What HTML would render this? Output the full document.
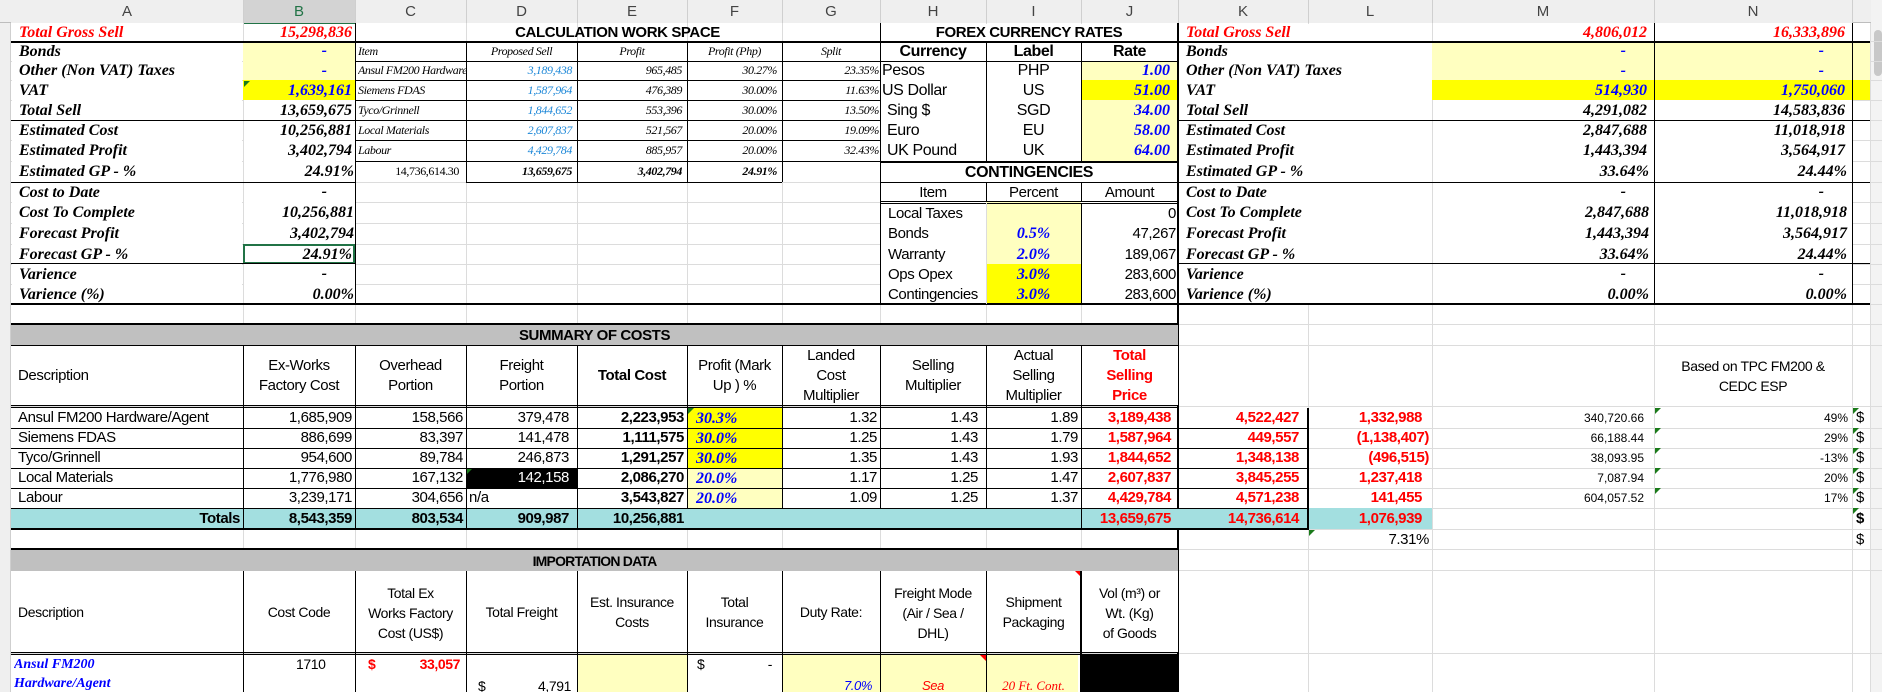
<!DOCTYPE html>
<html><head><meta charset="utf-8">
<style>
html,body{margin:0;padding:0;background:#fff;}
body{width:1882px;height:692px;position:relative;overflow:hidden;font-family:"Liberation Sans",sans-serif;}
.a{position:absolute;white-space:nowrap;overflow:hidden;box-sizing:border-box;}
.gv{position:absolute;top:23px;width:1px;height:669px;background:#dcdcdc;}
.hv{position:absolute;top:0;width:1px;height:23px;background:#cfcfcf;}
.gh{position:absolute;left:11px;width:1871px;height:1px;background:#dcdcdc;}
.bh{position:absolute;height:1px;background:#000;}
.bv{position:absolute;width:1px;background:#000;}
.sb{font-family:"Liberation Serif",serif;font-weight:bold;font-style:italic;font-size:16px;color:#000;}
.si{font-family:"Liberation Serif",serif;font-style:italic;font-size:12px;letter-spacing:-0.4px;}
.ar{font-family:"Liberation Sans",sans-serif;font-size:15px;letter-spacing:-0.4px;}
.r{text-align:right;padding-right:3px;}
.c{text-align:center;}
.red{color:#f00;}
.blue{color:#00f;}
.ly{background:#ffffc0;}
.yy{background:#ffff00;}
.b{font-weight:bold;}
.tri{position:absolute;width:0;height:0;border-top:6px solid #1a7a1a;border-right:6px solid transparent;}
.hd{position:absolute;top:0;height:23px;line-height:24px;text-align:center;font-size:15px;color:#444;background:#efefef;font-family:"Liberation Sans",sans-serif;}
</style></head><body>

<div class="a" style="left:0;top:0;width:1882px;height:23px;background:#efefef;border-bottom:1px solid #bdbdbd"></div>
<div class="hd" style="left:11px;width:232px">A</div>
<div class="hd" style="left:243px;width:112px;background:#d3d3d3;border-bottom:2px solid #217346;color:#217346">B</div>
<div class="hd" style="left:355px;width:111px">C</div>
<div class="hd" style="left:466px;width:111px">D</div>
<div class="hd" style="left:577px;width:110px">E</div>
<div class="hd" style="left:687px;width:95px">F</div>
<div class="hd" style="left:782px;width:98px">G</div>
<div class="hd" style="left:880px;width:106px">H</div>
<div class="hd" style="left:986px;width:95px">I</div>
<div class="hd" style="left:1081px;width:97px">J</div>
<div class="hd" style="left:1178px;width:130px">K</div>
<div class="hd" style="left:1308px;width:124px">L</div>
<div class="hd" style="left:1432px;width:222px">M</div>
<div class="hd" style="left:1654px;width:198px">N</div>
<div class="hv" style="left:243px"></div><div class="hv" style="left:355px"></div><div class="hv" style="left:466px"></div>
<div class="hv" style="left:577px"></div><div class="hv" style="left:687px"></div><div class="hv" style="left:782px"></div>
<div class="hv" style="left:880px"></div><div class="hv" style="left:986px"></div><div class="hv" style="left:1081px"></div>
<div class="hv" style="left:1178px"></div><div class="hv" style="left:1308px"></div><div class="hv" style="left:1432px"></div>
<div class="hv" style="left:1654px"></div><div class="hv" style="left:1852px"></div>
<div class="a" style="left:0;top:23px;width:11px;height:669px;background:#efefef;border-right:1px solid #cfcfcf"></div>
<div class="a" style="left:1871px;top:0;width:11px;height:692px;background:#f3f3f3"></div>
<div class="a" style="left:1874px;top:30px;width:8px;height:46px;background:#c8c8c8;border-radius:4px"></div>

<div class="gv" style="left:243px"></div><div class="gv" style="left:355px"></div><div class="gv" style="left:466px"></div>
<div class="gv" style="left:577px"></div><div class="gv" style="left:687px"></div><div class="gv" style="left:782px"></div>
<div class="gv" style="left:880px"></div><div class="gv" style="left:986px"></div><div class="gv" style="left:1081px"></div>
<div class="gv" style="left:1308px"></div><div class="gv" style="left:1432px"></div><div class="gv" style="left:1654px"></div>
<div class="gv" style="left:1852px"></div><div class="gv" style="left:1870px"></div>
<div class="gh" style="top:41px"></div><div class="gh" style="top:61px"></div><div class="gh" style="top:80px"></div>
<div class="gh" style="top:100px"></div><div class="gh" style="top:120px"></div><div class="gh" style="top:140px"></div>
<div class="gh" style="top:161px"></div><div class="gh" style="top:182px"></div><div class="gh" style="top:202px"></div>
<div class="gh" style="top:223px"></div><div class="gh" style="top:244px"></div><div class="gh" style="top:264px"></div>
<div class="gh" style="top:284px"></div><div class="gh" style="top:304px"></div><div class="gh" style="top:324px"></div>
<div class="gh" style="top:345px"></div><div class="gh" style="top:406px"></div><div class="gh" style="top:428px"></div>
<div class="gh" style="top:448px"></div><div class="gh" style="top:468px"></div><div class="gh" style="top:488px"></div>
<div class="gh" style="top:508px"></div><div class="gh" style="top:529px"></div><div class="gh" style="top:549px"></div>
<div class="gh" style="top:570px"></div><div class="gh" style="top:653px"></div>

<div class="a" style="left:12px;top:24px;width:230px;height:280px;background:#fff"></div>
<div class="a" style="left:244px;top:24px;width:111px;height:280px;background:#fff"></div>
<div class="a" style="left:881px;top:24px;width:297px;height:280px;background:#fff"></div>
<div class="a" style="left:1179px;top:24px;width:253px;height:280px;background:#fff"></div>
<div class="a" style="left:1433px;top:24px;width:221px;height:280px;background:#fff"></div>
<div class="a" style="left:1655px;top:24px;width:197px;height:280px;background:#fff"></div>

<div class="a ly" style="left:243px;top:41px;width:112px;height:39px"></div>
<div class="a yy" style="left:243px;top:80px;width:112px;height:20px"></div>
<div class="a ly" style="left:1081px;top:61px;width:97px;height:100px"></div>
<div class="a yy" style="left:1081px;top:80px;width:97px;height:20px"></div>
<div class="a ly" style="left:986px;top:202px;width:95px;height:62px"></div>
<div class="a yy" style="left:986px;top:264px;width:95px;height:40px"></div>
<div class="a ly" style="left:1432px;top:41px;width:438px;height:39px"></div>
<div class="a yy" style="left:1432px;top:80px;width:438px;height:20px"></div>

<!-- LEFT SUMMARY BOX -->
<div class="a sb red" style="left:11px;top:23px;width:232px;height:18px;line-height:19px;padding-left:8px">Total Gross Sell</div>
<div class="a sb red r" style="left:243px;top:23px;width:112px;height:18px;line-height:19px">15,298,836</div>
<div class="a sb" style="left:11px;top:41px;width:232px;height:20px;line-height:21px;padding-left:8px">Bonds</div>
<div class="a sb blue r" style="left:243px;top:41px;width:112px;height:20px;line-height:20px;padding-right:28px">-</div>
<div class="a sb" style="left:11px;top:61px;width:232px;height:19px;line-height:20px;padding-left:8px">Other (Non VAT) Taxes</div>
<div class="a sb blue r" style="left:243px;top:61px;width:112px;height:19px;line-height:19px;padding-right:28px">-</div>
<div class="a sb" style="left:11px;top:80px;width:232px;height:20px;line-height:21px;padding-left:8px">VAT</div>
<div class="a sb blue r" style="left:243px;top:80px;width:112px;height:20px;line-height:21px">1,639,161</div>
<div class="tri" style="left:244px;top:81px"></div>
<div class="a sb" style="left:11px;top:100px;width:232px;height:20px;line-height:21px;padding-left:8px">Total Sell</div>
<div class="a sb r" style="left:243px;top:100px;width:112px;height:20px;line-height:21px">13,659,675</div>
<div class="a sb" style="left:11px;top:120px;width:232px;height:20px;line-height:21px;padding-left:8px">Estimated Cost</div>
<div class="a sb r" style="left:243px;top:120px;width:112px;height:20px;line-height:21px">10,256,881</div>
<div class="a sb" style="left:11px;top:140px;width:232px;height:21px;line-height:22px;padding-left:8px">Estimated Profit</div>
<div class="a sb r" style="left:243px;top:140px;width:112px;height:21px;line-height:22px">3,402,794</div>
<div class="a sb" style="left:11px;top:161px;width:232px;height:21px;line-height:22px;padding-left:8px">Estimated GP - %</div>
<div class="a sb r" style="left:243px;top:161px;width:112px;height:21px;line-height:22px;padding-right:1px">24.91%</div>
<div class="a sb" style="left:11px;top:182px;width:232px;height:20px;line-height:21px;padding-left:8px">Cost to Date</div>
<div class="a sb r" style="left:243px;top:182px;width:112px;height:20px;line-height:20px;padding-right:28px">-</div>
<div class="a sb" style="left:11px;top:202px;width:232px;height:21px;line-height:22px;padding-left:8px">Cost To Complete</div>
<div class="a sb r" style="left:243px;top:202px;width:112px;height:21px;line-height:22px;padding-right:1px">10,256,881</div>
<div class="a sb" style="left:11px;top:223px;width:232px;height:21px;line-height:22px;padding-left:8px">Forecast Profit</div>
<div class="a sb r" style="left:243px;top:223px;width:112px;height:21px;line-height:22px;padding-right:1px">3,402,794</div>
<div class="a sb" style="left:11px;top:244px;width:232px;height:20px;line-height:21px;padding-left:8px">Forecast GP - %</div>
<div class="a sb r" style="left:243px;top:244px;width:112px;height:20px;line-height:18px;padding-right:1px;border:2px solid #217346">24.91%</div>
<div class="a sb" style="left:11px;top:264px;width:232px;height:20px;line-height:21px;padding-left:8px">Varience</div>
<div class="a sb r" style="left:243px;top:264px;width:112px;height:20px;line-height:20px;padding-right:28px">-</div>
<div class="a sb" style="left:11px;top:284px;width:232px;height:20px;line-height:21px;padding-left:8px">Varience (%)</div>
<div class="a sb r" style="left:243px;top:284px;width:112px;height:20px;line-height:21px;padding-right:1px">0.00%</div>
<div class="bh" style="left:11px;top:41px;width:1859px;height:2px"></div>
<div class="bh" style="left:11px;top:120px;width:344px"></div>
<div class="bh" style="left:11px;top:182px;width:344px"></div>
<div class="bv" style="left:355px;top:23px;height:281px;"></div>
<div class="bh" style="left:11px;top:303px;width:1859px;height:2px"></div>

<!-- CALCULATION WORK SPACE -->
<div class="a ar b c" style="left:355px;top:23px;width:525px;height:18px;line-height:19px;font-size:15px">CALCULATION WORK SPACE</div>
<div class="a si" style="left:358px;top:41px;width:108px;height:20px;line-height:20px">Item</div>
<div class="a si c" style="left:466px;top:41px;width:111px;height:20px;line-height:20px">Proposed Sell</div>
<div class="a si c" style="left:577px;top:41px;width:110px;height:20px;line-height:20px">Profit</div>
<div class="a si c" style="left:687px;top:41px;width:95px;height:20px;line-height:20px">Profit (Php)</div>
<div class="a si c" style="left:782px;top:41px;width:98px;height:20px;line-height:20px">Split</div>

<div class="a si" style="left:358px;top:61px;width:108px;height:19px;line-height:19px">Ansul FM200 Hardware/Agent</div>
<div class="a si" style="left:358px;top:80px;width:108px;height:20px;line-height:20px">Siemens FDAS</div>
<div class="a si" style="left:358px;top:100px;width:108px;height:20px;line-height:20px">Tyco/Grinnell</div>
<div class="a si" style="left:358px;top:120px;width:108px;height:20px;line-height:20px">Local Materials</div>
<div class="a si" style="left:358px;top:140px;width:108px;height:21px;line-height:21px">Labour</div>
<div class="a si r" style="left:466px;top:61px;width:111px;height:19px;line-height:19px;color:#1e88d8;padding-right:5px">3,189,438</div>
<div class="a si r" style="left:466px;top:80px;width:111px;height:20px;line-height:20px;color:#1e88d8;padding-right:5px">1,587,964</div>
<div class="a si r" style="left:466px;top:100px;width:111px;height:20px;line-height:20px;color:#1e88d8;padding-right:5px">1,844,652</div>
<div class="a si r" style="left:466px;top:120px;width:111px;height:20px;line-height:20px;color:#1e88d8;padding-right:5px">2,607,837</div>
<div class="a si r" style="left:466px;top:140px;width:111px;height:21px;line-height:21px;color:#1e88d8;padding-right:5px">4,429,784</div>
<div class="a si r" style="left:577px;top:61px;width:110px;height:19px;line-height:19px;padding-right:5px">965,485</div>
<div class="a si r" style="left:577px;top:80px;width:110px;height:20px;line-height:20px;padding-right:5px">476,389</div>
<div class="a si r" style="left:577px;top:100px;width:110px;height:20px;line-height:20px;padding-right:5px">553,396</div>
<div class="a si r" style="left:577px;top:120px;width:110px;height:20px;line-height:20px;padding-right:5px">521,567</div>
<div class="a si r" style="left:577px;top:140px;width:110px;height:21px;line-height:21px;padding-right:5px">885,957</div>
<div class="a si r" style="left:687px;top:61px;width:95px;height:19px;line-height:19px;padding-right:5px">30.27%</div>
<div class="a si r" style="left:687px;top:80px;width:95px;height:20px;line-height:20px;padding-right:5px">30.00%</div>
<div class="a si r" style="left:687px;top:100px;width:95px;height:20px;line-height:20px;padding-right:5px">30.00%</div>
<div class="a si r" style="left:687px;top:120px;width:95px;height:20px;line-height:20px;padding-right:5px">20.00%</div>
<div class="a si r" style="left:687px;top:140px;width:95px;height:21px;line-height:21px;padding-right:5px">20.00%</div>
<div class="a si r" style="left:782px;top:61px;width:98px;height:19px;line-height:19px;padding-right:1px">23.35%</div>
<div class="a si r" style="left:782px;top:80px;width:98px;height:20px;line-height:20px;padding-right:1px">11.63%</div>
<div class="a si r" style="left:782px;top:100px;width:98px;height:20px;line-height:20px;padding-right:1px">13.50%</div>
<div class="a si r" style="left:782px;top:120px;width:98px;height:20px;line-height:20px;padding-right:1px">19.09%</div>
<div class="a si r" style="left:782px;top:140px;width:98px;height:21px;line-height:21px;padding-right:1px">32.43%</div>
<div class="a si r" style="left:355px;top:161px;width:111px;height:21px;line-height:21px;font-style:normal;padding-right:7px">14,736,614.30</div>
<div class="a si r b" style="left:466px;top:161px;width:111px;height:21px;line-height:21px;padding-right:5px">13,659,675</div>
<div class="a si r b" style="left:577px;top:161px;width:110px;height:21px;line-height:21px;padding-right:5px">3,402,794</div>
<div class="a si r b" style="left:687px;top:161px;width:95px;height:21px;line-height:21px;padding-right:5px">24.91%</div>
<div class="bh" style="left:355px;top:61px;width:525px"></div>
<div class="bh" style="left:355px;top:80px;width:525px"></div>
<div class="bh" style="left:355px;top:100px;width:525px"></div>
<div class="bh" style="left:355px;top:120px;width:525px"></div>
<div class="bh" style="left:355px;top:140px;width:525px"></div>
<div class="bh" style="left:355px;top:161px;width:525px"></div>
<div class="bh" style="left:466px;top:182px;width:316px"></div>
<div class="bv" style="left:466px;top:41px;height:141px"></div>
<div class="bv" style="left:577px;top:41px;height:141px"></div>
<div class="bv" style="left:687px;top:41px;height:141px"></div>
<div class="bv" style="left:782px;top:41px;height:141px"></div>
<div class="bv" style="left:880px;top:23px;height:281px"></div>

<!-- FOREX -->
<div class="a ar b c" style="left:880px;top:23px;width:298px;height:18px;line-height:19px;font-size:15px">FOREX CURRENCY RATES</div>
<div class="a ar b c" style="left:880px;top:41px;width:106px;height:20px;line-height:21px;font-size:16px">Currency</div>
<div class="a ar b c" style="left:986px;top:41px;width:95px;height:20px;line-height:21px;font-size:16px">Label</div>
<div class="a ar b c" style="left:1081px;top:41px;width:97px;height:20px;line-height:21px;font-size:16px">Rate</div>
<div class="a ar" style="left:882px;top:61px;width:104px;height:19px;line-height:20px;font-size:16px">Pesos</div>
<div class="a ar" style="left:882px;top:80px;width:104px;height:20px;line-height:21px;font-size:16px">US Dollar</div>
<div class="a ar" style="left:887px;top:100px;width:99px;height:20px;line-height:21px;font-size:16px">Sing $</div>
<div class="a ar" style="left:887px;top:120px;width:99px;height:20px;line-height:21px;font-size:16px">Euro</div>
<div class="a ar" style="left:887px;top:140px;width:99px;height:21px;line-height:22px;font-size:16px">UK Pound</div>
<div class="a ar c" style="left:986px;top:61px;width:95px;height:19px;line-height:20px;font-size:16px">PHP</div>
<div class="a ar c" style="left:986px;top:80px;width:95px;height:20px;line-height:21px;font-size:16px">US</div>
<div class="a ar c" style="left:986px;top:100px;width:95px;height:20px;line-height:21px;font-size:16px">SGD</div>
<div class="a ar c" style="left:986px;top:120px;width:95px;height:20px;line-height:21px;font-size:16px">EU</div>
<div class="a ar c" style="left:986px;top:140px;width:95px;height:21px;line-height:22px;font-size:16px">UK</div>
<div class="a sb blue r" style="left:1081px;top:61px;width:97px;height:19px;line-height:20px;padding-right:8px">1.00</div>
<div class="a sb blue r" style="left:1081px;top:80px;width:97px;height:20px;line-height:21px;padding-right:8px">51.00</div>
<div class="a sb blue r" style="left:1081px;top:100px;width:97px;height:20px;line-height:21px;padding-right:8px">34.00</div>
<div class="a sb blue r" style="left:1081px;top:120px;width:97px;height:20px;line-height:21px;padding-right:8px">58.00</div>
<div class="a sb blue r" style="left:1081px;top:140px;width:97px;height:21px;line-height:22px;padding-right:8px">64.00</div>
<div class="a ar b c" style="left:880px;top:162px;width:298px;height:20px;line-height:21px;font-size:16px">CONTINGENCIES</div>
<div class="a ar c" style="left:880px;top:182px;width:106px;height:20px;line-height:21px;font-size:15px">Item</div>
<div class="a ar c" style="left:986px;top:182px;width:95px;height:20px;line-height:21px;font-size:15px">Percent</div>
<div class="a ar c" style="left:1081px;top:182px;width:97px;height:20px;line-height:21px;font-size:15px">Amount</div>
<div class="a ar" style="left:888px;top:203px;width:98px;height:20px;line-height:21px;font-size:15px">Local Taxes</div>
<div class="a ar" style="left:888px;top:223px;width:98px;height:21px;line-height:22px;font-size:15px">Bonds</div>
<div class="a ar" style="left:888px;top:244px;width:98px;height:20px;line-height:21px;font-size:15px">Warranty</div>
<div class="a ar" style="left:888px;top:264px;width:98px;height:20px;line-height:21px;font-size:15px">Ops Opex</div>
<div class="a ar" style="left:888px;top:284px;width:98px;height:20px;line-height:21px;font-size:15px">Contingencies</div>
<div class="a sb blue c" style="left:986px;top:223px;width:95px;height:21px;line-height:22px">0.5%</div>
<div class="a sb blue c" style="left:986px;top:244px;width:95px;height:20px;line-height:21px">2.0%</div>
<div class="a sb blue c" style="left:986px;top:264px;width:95px;height:20px;line-height:21px">3.0%</div>
<div class="a sb blue c" style="left:986px;top:284px;width:95px;height:20px;line-height:21px">3.0%</div>
<div class="a ar r" style="left:1081px;top:203px;width:97px;height:20px;line-height:21px;font-size:15px;padding-right:2px">0</div>
<div class="a ar r" style="left:1081px;top:223px;width:97px;height:21px;line-height:22px;font-size:15px;padding-right:2px">47,267</div>
<div class="a ar r" style="left:1081px;top:244px;width:97px;height:20px;line-height:21px;font-size:15px;padding-right:2px">189,067</div>
<div class="a ar r" style="left:1081px;top:264px;width:97px;height:20px;line-height:21px;font-size:15px;padding-right:2px">283,600</div>
<div class="a ar r" style="left:1081px;top:284px;width:97px;height:20px;line-height:21px;font-size:15px;padding-right:2px">283,600</div>
<div class="bh" style="left:880px;top:61px;width:298px"></div>
<div class="bh" style="left:880px;top:161px;width:298px;height:2px"></div>
<div class="bh" style="left:880px;top:182px;width:298px"></div>
<div class="bh" style="left:880px;top:201px;width:298px"></div>
<div class="bh" style="left:880px;top:203px;width:298px"></div>
<div class="bv" style="left:986px;top:41px;height:120px"></div>
<div class="bv" style="left:1081px;top:41px;height:120px"></div>
<div class="bv" style="left:986px;top:182px;height:20px"></div>
<div class="bv" style="left:1081px;top:182px;height:20px"></div>
<div class="bv" style="left:1081px;top:203px;height:101px"></div>
<div class="bv" style="left:986px;top:203px;height:101px;background:#dcdcdc"></div>
<div class="bv" style="left:1177px;top:23px;height:669px;width:2px"></div>

<!-- RIGHT SUMMARY BOX K-N -->
<div class="a sb red" style="left:1180px;top:23px;width:252px;height:18px;line-height:19px;padding-left:6px">Total Gross Sell</div>
<div class="a sb" style="left:1180px;top:41px;width:252px;height:20px;line-height:21px;padding-left:6px">Bonds</div>
<div class="a sb" style="left:1180px;top:61px;width:252px;height:19px;line-height:20px;padding-left:6px">Other (Non VAT) Taxes</div>
<div class="a sb" style="left:1180px;top:80px;width:252px;height:20px;line-height:21px;padding-left:6px">VAT</div>
<div class="a sb" style="left:1180px;top:100px;width:252px;height:20px;line-height:21px;padding-left:6px">Total Sell</div>
<div class="a sb" style="left:1180px;top:120px;width:252px;height:20px;line-height:21px;padding-left:6px">Estimated Cost</div>
<div class="a sb" style="left:1180px;top:140px;width:252px;height:21px;line-height:22px;padding-left:6px">Estimated Profit</div>
<div class="a sb" style="left:1180px;top:161px;width:252px;height:21px;line-height:22px;padding-left:6px">Estimated GP - %</div>
<div class="a sb" style="left:1180px;top:182px;width:252px;height:20px;line-height:21px;padding-left:6px">Cost to Date</div>
<div class="a sb" style="left:1180px;top:202px;width:252px;height:21px;line-height:22px;padding-left:6px">Cost To Complete</div>
<div class="a sb" style="left:1180px;top:223px;width:252px;height:21px;line-height:22px;padding-left:6px">Forecast Profit</div>
<div class="a sb" style="left:1180px;top:244px;width:252px;height:20px;line-height:21px;padding-left:6px">Forecast GP - %</div>
<div class="a sb" style="left:1180px;top:264px;width:252px;height:20px;line-height:21px;padding-left:6px">Varience</div>
<div class="a sb" style="left:1180px;top:284px;width:252px;height:20px;line-height:21px;padding-left:6px">Varience (%)</div>

<div class="a sb red r" style="left:1432px;top:23px;width:222px;height:18px;line-height:19px;padding-right:7px">4,806,012</div>
<div class="a sb blue r" style="left:1432px;top:41px;width:222px;height:20px;line-height:20px;padding-right:28px">-</div>
<div class="a sb blue r" style="left:1432px;top:61px;width:222px;height:19px;line-height:19px;padding-right:28px">-</div>
<div class="a sb blue r" style="left:1432px;top:80px;width:222px;height:20px;line-height:21px;padding-right:7px">514,930</div>
<div class="a sb r" style="left:1432px;top:100px;width:222px;height:20px;line-height:21px;padding-right:7px">4,291,082</div>
<div class="a sb r" style="left:1432px;top:120px;width:222px;height:20px;line-height:21px;padding-right:7px">2,847,688</div>
<div class="a sb r" style="left:1432px;top:140px;width:222px;height:21px;line-height:22px;padding-right:7px">1,443,394</div>
<div class="a sb r" style="left:1432px;top:161px;width:222px;height:21px;line-height:22px;padding-right:5px">33.64%</div>
<div class="a sb r" style="left:1432px;top:182px;width:222px;height:20px;line-height:20px;padding-right:28px">-</div>
<div class="a sb r" style="left:1432px;top:202px;width:222px;height:21px;line-height:22px;padding-right:5px">2,847,688</div>
<div class="a sb r" style="left:1432px;top:223px;width:222px;height:21px;line-height:22px;padding-right:5px">1,443,394</div>
<div class="a sb r" style="left:1432px;top:244px;width:222px;height:20px;line-height:21px;padding-right:5px">33.64%</div>
<div class="a sb r" style="left:1432px;top:264px;width:222px;height:20px;line-height:20px;padding-right:28px">-</div>
<div class="a sb r" style="left:1432px;top:284px;width:222px;height:20px;line-height:21px;padding-right:5px">0.00%</div>

<div class="a sb red r" style="left:1654px;top:23px;width:198px;height:18px;line-height:19px;padding-right:7px">16,333,896</div>
<div class="a sb blue r" style="left:1654px;top:41px;width:198px;height:20px;line-height:20px;padding-right:28px">-</div>
<div class="a sb blue r" style="left:1654px;top:61px;width:198px;height:19px;line-height:19px;padding-right:28px">-</div>
<div class="a sb blue r" style="left:1654px;top:80px;width:198px;height:20px;line-height:21px;padding-right:7px">1,750,060</div>
<div class="a sb r" style="left:1654px;top:100px;width:198px;height:20px;line-height:21px;padding-right:7px">14,583,836</div>
<div class="a sb r" style="left:1654px;top:120px;width:198px;height:20px;line-height:21px;padding-right:7px">11,018,918</div>
<div class="a sb r" style="left:1654px;top:140px;width:198px;height:21px;line-height:22px;padding-right:7px">3,564,917</div>
<div class="a sb r" style="left:1654px;top:161px;width:198px;height:21px;line-height:22px;padding-right:5px">24.44%</div>
<div class="a sb r" style="left:1654px;top:182px;width:198px;height:20px;line-height:20px;padding-right:28px">-</div>
<div class="a sb r" style="left:1654px;top:202px;width:198px;height:21px;line-height:22px;padding-right:5px">11,018,918</div>
<div class="a sb r" style="left:1654px;top:223px;width:198px;height:21px;line-height:22px;padding-right:5px">3,564,917</div>
<div class="a sb r" style="left:1654px;top:244px;width:198px;height:20px;line-height:21px;padding-right:5px">24.44%</div>
<div class="a sb r" style="left:1654px;top:264px;width:198px;height:20px;line-height:20px;padding-right:28px">-</div>
<div class="a sb r" style="left:1654px;top:284px;width:198px;height:20px;line-height:21px;padding-right:5px">0.00%</div>
<div class="bh" style="left:1178px;top:120px;width:692px"></div>
<div class="bh" style="left:1178px;top:182px;width:692px"></div>
<div class="bh" style="left:1178px;top:263px;width:692px"></div>
<div class="bh" style="left:11px;top:263px;width:344px"></div>
<div class="bv" style="left:1654px;top:23px;height:281px"></div>
<div class="bv" style="left:1852px;top:23px;height:281px"></div>

<!-- SUMMARY OF COSTS -->
<div class="bh" style="left:11px;top:323px;width:1167px;height:2px"></div>
<div class="a ar b c" style="left:11px;top:325px;width:1167px;height:20px;line-height:21px;background:#c0c0c0;font-size:15px">SUMMARY OF COSTS</div>
<div class="a" style="left:11px;top:345px;width:1167px;height:61px;background:#fff"></div>
<div class="a ar" style="left:18px;top:345px;width:225px;height:61px;line-height:62px">Description</div>
<div class="a ar c" style="left:243px;top:345px;width:112px;height:61px;line-height:20px;padding-top:11px">Ex-Works<br>Factory Cost</div>
<div class="a ar c" style="left:355px;top:345px;width:111px;height:61px;line-height:20px;padding-top:11px">Overhead<br>Portion</div>
<div class="a ar c" style="left:466px;top:345px;width:111px;height:61px;line-height:20px;padding-top:11px">Freight<br>Portion</div>
<div class="a ar c b" style="left:577px;top:345px;width:110px;height:61px;line-height:62px">Total Cost</div>
<div class="a ar c" style="left:687px;top:345px;width:95px;height:61px;line-height:20px;padding-top:11px">Profit (Mark<br>Up ) %</div>
<div class="a ar c" style="left:782px;top:345px;width:98px;height:61px;line-height:20px;padding-top:1px">Landed<br>Cost<br>Multiplier</div>
<div class="a ar c" style="left:880px;top:345px;width:106px;height:61px;line-height:20px;padding-top:11px">Selling<br>Multiplier</div>
<div class="a ar c" style="left:986px;top:345px;width:95px;height:61px;line-height:20px;padding-top:1px">Actual<br>Selling<br>Multiplier</div>
<div class="a ar c b red" style="left:1081px;top:345px;width:97px;height:61px;line-height:20px;padding-top:1px">Total<br>Selling<br>Price</div>
<div class="a ar c" style="left:1654px;top:345px;width:198px;height:61px;line-height:20px;padding-top:11px;font-size:14px">Based on TPC FM200 &amp;<br>CEDC ESP</div>

<div class="a yy" style="left:687px;top:408px;width:95px;height:60px"></div>
<div class="a ly" style="left:687px;top:468px;width:95px;height:40px"></div>
<div class="tri" style="left:688px;top:408px"></div>
<div class="a" style="left:466px;top:468px;width:111px;height:20px;background:#000"></div>
<div class="tri" style="left:467px;top:468px"></div>
<div class="a" style="left:11px;top:508px;width:1297px;height:21px;background:#a3dfe0"></div>
<div class="a" style="left:1308px;top:508px;width:124px;height:21px;background:#a3dfe0"></div>

<div class="a ar" style="left:18px;top:408px;width:225px;height:20px;line-height:20px">Ansul FM200 Hardware/Agent</div>
<div class="a ar" style="left:18px;top:428px;width:225px;height:20px;line-height:20px">Siemens FDAS</div>
<div class="a ar" style="left:18px;top:448px;width:225px;height:20px;line-height:20px">Tyco/Grinnell</div>
<div class="a ar" style="left:18px;top:468px;width:225px;height:20px;line-height:20px">Local Materials</div>
<div class="a ar" style="left:18px;top:488px;width:225px;height:20px;line-height:20px">Labour</div>
<div class="a ar b r" style="left:11px;top:508px;width:232px;height:21px;line-height:21px">Totals</div>

<div class="a ar r" style="left:243px;top:408px;width:112px;height:20px;line-height:20px">1,685,909</div>
<div class="a ar r" style="left:243px;top:428px;width:112px;height:20px;line-height:20px">886,699</div>
<div class="a ar r" style="left:243px;top:448px;width:112px;height:20px;line-height:20px">954,600</div>
<div class="a ar r" style="left:243px;top:468px;width:112px;height:20px;line-height:20px">1,776,980</div>
<div class="a ar r" style="left:243px;top:488px;width:112px;height:20px;line-height:20px">3,239,171</div>
<div class="a ar r b" style="left:243px;top:508px;width:112px;height:21px;line-height:21px">8,543,359</div>
<div class="a ar r" style="left:355px;top:408px;width:111px;height:20px;line-height:20px">158,566</div>
<div class="a ar r" style="left:355px;top:428px;width:111px;height:20px;line-height:20px">83,397</div>
<div class="a ar r" style="left:355px;top:448px;width:111px;height:20px;line-height:20px">89,784</div>
<div class="a ar r" style="left:355px;top:468px;width:111px;height:20px;line-height:20px">167,132</div>
<div class="a ar r" style="left:355px;top:488px;width:111px;height:20px;line-height:20px">304,656</div>
<div class="a ar r b" style="left:355px;top:508px;width:111px;height:21px;line-height:21px">803,534</div>
<div class="a ar r" style="left:466px;top:408px;width:111px;height:20px;line-height:20px;padding-right:8px">379,478</div>
<div class="a ar r" style="left:466px;top:428px;width:111px;height:20px;line-height:20px;padding-right:8px">141,478</div>
<div class="a ar r" style="left:466px;top:448px;width:111px;height:20px;line-height:20px;padding-right:8px">246,873</div>
<div class="a ar r" style="left:466px;top:468px;width:111px;height:20px;line-height:20px;padding-right:8px;color:#fff">142,158</div>
<div class="a ar" style="left:466px;top:488px;width:111px;height:20px;line-height:20px;padding-left:3px">n/a</div>
<div class="a ar r b" style="left:466px;top:508px;width:111px;height:21px;line-height:21px;padding-right:8px">909,987</div>
<div class="a ar r b" style="left:577px;top:408px;width:110px;height:20px;line-height:20px">2,223,953</div>
<div class="a ar r b" style="left:577px;top:428px;width:110px;height:20px;line-height:20px">1,111,575</div>
<div class="a ar r b" style="left:577px;top:448px;width:110px;height:20px;line-height:20px">1,291,257</div>
<div class="a ar r b" style="left:577px;top:468px;width:110px;height:20px;line-height:20px">2,086,270</div>
<div class="a ar r b" style="left:577px;top:488px;width:110px;height:20px;line-height:20px">3,543,827</div>
<div class="a ar r b" style="left:577px;top:508px;width:110px;height:21px;line-height:21px">10,256,881</div>
<div class="a sb blue" style="left:696px;top:408px;width:86px;height:20px;line-height:21px">30.3%</div>
<div class="a sb blue" style="left:696px;top:428px;width:86px;height:20px;line-height:21px">30.0%</div>
<div class="a sb blue" style="left:696px;top:448px;width:86px;height:20px;line-height:21px">30.0%</div>
<div class="a sb blue" style="left:696px;top:468px;width:86px;height:20px;line-height:21px">20.0%</div>
<div class="a sb blue" style="left:696px;top:488px;width:86px;height:20px;line-height:21px">20.0%</div>
<div class="a ar r" style="left:782px;top:408px;width:98px;height:20px;line-height:20px">1.32</div>
<div class="a ar r" style="left:782px;top:428px;width:98px;height:20px;line-height:20px">1.25</div>
<div class="a ar r" style="left:782px;top:448px;width:98px;height:20px;line-height:20px">1.35</div>
<div class="a ar r" style="left:782px;top:468px;width:98px;height:20px;line-height:20px">1.17</div>
<div class="a ar r" style="left:782px;top:488px;width:98px;height:20px;line-height:20px">1.09</div>
<div class="a ar r" style="left:880px;top:408px;width:106px;height:20px;line-height:20px;padding-right:8px">1.43</div>
<div class="a ar r" style="left:880px;top:428px;width:106px;height:20px;line-height:20px;padding-right:8px">1.43</div>
<div class="a ar r" style="left:880px;top:448px;width:106px;height:20px;line-height:20px;padding-right:8px">1.43</div>
<div class="a ar r" style="left:880px;top:468px;width:106px;height:20px;line-height:20px;padding-right:8px">1.25</div>
<div class="a ar r" style="left:880px;top:488px;width:106px;height:20px;line-height:20px;padding-right:8px">1.25</div>
<div class="a ar r" style="left:986px;top:408px;width:95px;height:20px;line-height:20px">1.89</div>
<div class="a ar r" style="left:986px;top:428px;width:95px;height:20px;line-height:20px">1.79</div>
<div class="a ar r" style="left:986px;top:448px;width:95px;height:20px;line-height:20px">1.93</div>
<div class="a ar r" style="left:986px;top:468px;width:95px;height:20px;line-height:20px">1.47</div>
<div class="a ar r" style="left:986px;top:488px;width:95px;height:20px;line-height:20px">1.37</div>
<div class="a ar r b red" style="left:1081px;top:408px;width:97px;height:20px;line-height:20px;padding-right:7px">3,189,438</div>
<div class="a ar r b red" style="left:1081px;top:428px;width:97px;height:20px;line-height:20px;padding-right:7px">1,587,964</div>
<div class="a ar r b red" style="left:1081px;top:448px;width:97px;height:20px;line-height:20px;padding-right:7px">1,844,652</div>
<div class="a ar r b red" style="left:1081px;top:468px;width:97px;height:20px;line-height:20px;padding-right:7px">2,607,837</div>
<div class="a ar r b red" style="left:1081px;top:488px;width:97px;height:20px;line-height:20px;padding-right:7px">4,429,784</div>
<div class="a ar r b red" style="left:1081px;top:508px;width:97px;height:21px;line-height:21px;padding-right:7px">13,659,675</div>
<div class="a ar r b red" style="left:1178px;top:408px;width:130px;height:20px;line-height:20px;padding-right:9px">4,522,427</div>
<div class="a ar r b red" style="left:1178px;top:428px;width:130px;height:20px;line-height:20px;padding-right:9px">449,557</div>
<div class="a ar r b red" style="left:1178px;top:448px;width:130px;height:20px;line-height:20px;padding-right:9px">1,348,138</div>
<div class="a ar r b red" style="left:1178px;top:468px;width:130px;height:20px;line-height:20px;padding-right:9px">3,845,255</div>
<div class="a ar r b red" style="left:1178px;top:488px;width:130px;height:20px;line-height:20px;padding-right:9px">4,571,238</div>
<div class="a ar r b red" style="left:1178px;top:508px;width:130px;height:21px;line-height:21px;padding-right:9px">14,736,614</div>
<div class="a ar r b red" style="left:1308px;top:408px;width:124px;height:20px;line-height:20px;padding-right:10px">1,332,988</div>
<div class="a ar r b red" style="left:1308px;top:428px;width:124px;height:20px;line-height:20px;padding-right:3px">(1,138,407)</div>
<div class="a ar r b red" style="left:1308px;top:448px;width:124px;height:20px;line-height:20px;padding-right:3px">(496,515)</div>
<div class="a ar r b red" style="left:1308px;top:468px;width:124px;height:20px;line-height:20px;padding-right:10px">1,237,418</div>
<div class="a ar r b red" style="left:1308px;top:488px;width:124px;height:20px;line-height:20px;padding-right:10px">141,455</div>
<div class="a ar r b red" style="left:1308px;top:508px;width:124px;height:21px;line-height:21px;padding-right:10px">1,076,939</div>
<div class="a ar r" style="left:1308px;top:529px;width:124px;height:20px;line-height:21px;padding-right:3px">7.31%</div>
<div class="tri" style="left:1309px;top:530px"></div>
<div class="a ar r" style="left:1432px;top:408px;width:222px;height:20px;line-height:20px;font-size:12px;letter-spacing:0;padding-right:10px">340,720.66</div>
<div class="a ar r" style="left:1432px;top:428px;width:222px;height:20px;line-height:20px;font-size:12px;letter-spacing:0;padding-right:10px">66,188.44</div>
<div class="a ar r" style="left:1432px;top:448px;width:222px;height:20px;line-height:20px;font-size:12px;letter-spacing:0;padding-right:10px">38,093.95</div>
<div class="a ar r" style="left:1432px;top:468px;width:222px;height:20px;line-height:20px;font-size:12px;letter-spacing:0;padding-right:10px">7,087.94</div>
<div class="a ar r" style="left:1432px;top:488px;width:222px;height:20px;line-height:20px;font-size:12px;letter-spacing:0;padding-right:10px">604,057.52</div>
<div class="a ar r" style="left:1654px;top:408px;width:198px;height:20px;line-height:20px;font-size:12px;letter-spacing:0;padding-right:4px">49%</div>
<div class="a ar r" style="left:1654px;top:428px;width:198px;height:20px;line-height:20px;font-size:12px;letter-spacing:0;padding-right:4px">29%</div>
<div class="a ar r" style="left:1654px;top:448px;width:198px;height:20px;line-height:20px;font-size:12px;letter-spacing:0;padding-right:4px">-13%</div>
<div class="a ar r" style="left:1654px;top:468px;width:198px;height:20px;line-height:20px;font-size:12px;letter-spacing:0;padding-right:4px">20%</div>
<div class="a ar r" style="left:1654px;top:488px;width:198px;height:20px;line-height:20px;font-size:12px;letter-spacing:0;padding-right:4px">17%</div>
<div class="tri" style="left:1655px;top:408px"></div><div class="tri" style="left:1655px;top:428px"></div>
<div class="tri" style="left:1655px;top:448px"></div><div class="tri" style="left:1655px;top:468px"></div>
<div class="tri" style="left:1655px;top:488px"></div>
<div class="a ar" style="left:1856px;top:408px;width:14px;height:20px;line-height:20px">$</div>
<div class="a ar" style="left:1856px;top:428px;width:14px;height:20px;line-height:20px">$</div>
<div class="a ar" style="left:1856px;top:448px;width:14px;height:20px;line-height:20px">$</div>
<div class="a ar" style="left:1856px;top:468px;width:14px;height:20px;line-height:20px">$</div>
<div class="a ar" style="left:1856px;top:488px;width:14px;height:20px;line-height:20px">$</div>
<div class="a ar b" style="left:1856px;top:508px;width:14px;height:21px;line-height:21px">$</div>
<div class="a ar" style="left:1856px;top:529px;width:14px;height:20px;line-height:21px">$</div>
<div class="tri" style="left:1853px;top:408px"></div><div class="tri" style="left:1853px;top:428px"></div>
<div class="tri" style="left:1853px;top:448px"></div><div class="tri" style="left:1853px;top:468px"></div>
<div class="tri" style="left:1853px;top:488px"></div><div class="tri" style="left:1853px;top:508px"></div>

<div class="bh" style="left:11px;top:345px;width:1167px"></div>
<div class="bh" style="left:11px;top:405px;width:1167px"></div>
<div class="bh" style="left:11px;top:407px;width:1167px"></div>
<div class="bh" style="left:11px;top:428px;width:1297px"></div>
<div class="bh" style="left:11px;top:448px;width:1297px"></div>
<div class="bh" style="left:11px;top:468px;width:1297px"></div>
<div class="bh" style="left:11px;top:488px;width:1297px"></div>
<div class="bh" style="left:11px;top:508px;width:1297px"></div>
<div class="bh" style="left:11px;top:528px;width:1297px;height:2px"></div>
<div class="bv" style="left:243px;top:345px;height:184px"></div>
<div class="bv" style="left:355px;top:345px;height:184px"></div>
<div class="bv" style="left:466px;top:345px;height:184px"></div>
<div class="bv" style="left:577px;top:345px;height:184px"></div>
<div class="bv" style="left:687px;top:345px;height:163px"></div>
<div class="bv" style="left:782px;top:345px;height:163px"></div>
<div class="bv" style="left:880px;top:345px;height:163px"></div>
<div class="bv" style="left:986px;top:345px;height:163px"></div>
<div class="bv" style="left:1081px;top:345px;height:184px"></div>
<div class="bv" style="left:1307px;top:408px;height:122px;width:2px"></div>

<!-- IMPORTATION DATA -->
<div class="bh" style="left:11px;top:548px;width:1167px;height:2px"></div>
<div class="a ar b c" style="left:11px;top:550px;width:1167px;height:21px;line-height:22px;background:#c0c0c0;font-size:14px;letter-spacing:-0.8px">IMPORTATION DATA</div>
<div class="a" style="left:11px;top:571px;width:1167px;height:82px;background:#fff"></div>
<div class="a ar" style="left:18px;top:571px;width:225px;height:82px;line-height:82px;font-size:14px">Description</div>
<div class="a ar c" style="left:243px;top:571px;width:112px;height:82px;line-height:82px;font-size:14px">Cost Code</div>
<div class="a ar c" style="left:355px;top:571px;width:111px;height:82px;line-height:20px;padding-top:12px;font-size:14px">Total Ex<br>Works Factory<br>Cost (US$)</div>
<div class="a ar c" style="left:466px;top:571px;width:111px;height:82px;line-height:82px;font-size:14px">Total Freight</div>
<div class="a ar c" style="left:577px;top:571px;width:110px;height:82px;line-height:20px;padding-top:21px;font-size:14px">Est. Insurance<br>Costs</div>
<div class="a ar c" style="left:687px;top:571px;width:95px;height:82px;line-height:20px;padding-top:21px;font-size:14px">Total<br>Insurance</div>
<div class="a ar c" style="left:782px;top:571px;width:98px;height:82px;line-height:82px;font-size:14px">Duty Rate:</div>
<div class="a ar c" style="left:880px;top:571px;width:106px;height:82px;line-height:20px;padding-top:12px;font-size:14px">Freight Mode<br>(Air / Sea /<br>DHL)</div>
<div class="a ar c" style="left:986px;top:571px;width:95px;height:82px;line-height:20px;padding-top:21px;font-size:14px">Shipment<br>Packaging</div>
<div class="a ar c" style="left:1081px;top:571px;width:97px;height:82px;line-height:20px;padding-top:12px;font-size:14px">Vol (m³) or<br>Wt. (Kg)<br>of Goods</div>
<div class="a" style="left:1075px;top:571px;width:0;height:0;border-top:6px solid #f00;border-left:6px solid transparent"></div>

<div class="a ly" style="left:577px;top:655px;width:110px;height:37px"></div>
<div class="a ly" style="left:782px;top:655px;width:296px;height:37px"></div>
<div class="a" style="left:1081px;top:655px;width:97px;height:37px;background:#000"></div>
<div class="a sb blue" style="left:14px;top:655px;width:229px;height:18px;line-height:19px;font-size:14px">Ansul FM200</div>
<div class="a sb blue" style="left:14px;top:673px;width:229px;height:19px;line-height:21px;font-size:14px">Hardware/Agent</div>
<div class="a ar" style="left:296px;top:655px;width:59px;height:18px;line-height:19px;font-size:14px">1710</div>
<div class="a ar b red" style="left:368px;top:655px;width:30px;height:18px;line-height:19px;font-size:14px">$</div>
<div class="a ar b red r" style="left:355px;top:655px;width:111px;height:18px;line-height:19px;font-size:14px;padding-right:6px">33,057</div>
<div class="a ar" style="left:478px;top:675px;width:30px;height:17px;line-height:22px;font-size:14px">$</div>
<div class="a ar r" style="left:466px;top:675px;width:111px;height:17px;line-height:22px;font-size:14px;padding-right:6px">4,791</div>
<div class="a ar" style="left:697px;top:655px;width:30px;height:18px;line-height:19px;font-size:14px">$</div>
<div class="a ar r" style="left:687px;top:655px;width:95px;height:18px;line-height:19px;font-size:14px;padding-right:10px">-</div>
<div class="a ar r blue" style="left:782px;top:675px;width:98px;height:17px;line-height:22px;font-size:13px;font-style:italic;padding-right:8px">7.0%</div>
<div class="a ar c red" style="left:880px;top:675px;width:106px;height:17px;line-height:22px;font-size:13px;font-style:italic">Sea</div>
<div class="a sb c red" style="left:986px;top:675px;width:95px;height:17px;line-height:22px;font-size:13px;font-weight:normal">20 Ft. Cont.</div>
<div class="a" style="left:980px;top:655px;width:0;height:0;border-top:6px solid #f00;border-left:6px solid transparent"></div>

<div class="bh" style="left:11px;top:652px;width:1167px"></div>
<div class="bh" style="left:11px;top:654px;width:1167px"></div>
<div class="bv" style="left:243px;top:571px;height:121px"></div>
<div class="bv" style="left:355px;top:571px;height:121px"></div>
<div class="bv" style="left:466px;top:571px;height:121px"></div>
<div class="bv" style="left:577px;top:571px;height:121px"></div>
<div class="bv" style="left:687px;top:571px;height:121px"></div>
<div class="bv" style="left:782px;top:571px;height:121px"></div>
<div class="bv" style="left:880px;top:571px;height:121px"></div>
<div class="bv" style="left:986px;top:571px;height:121px"></div>
<div class="bv" style="left:1080px;top:571px;height:121px;width:2px"></div>

</body></html>
